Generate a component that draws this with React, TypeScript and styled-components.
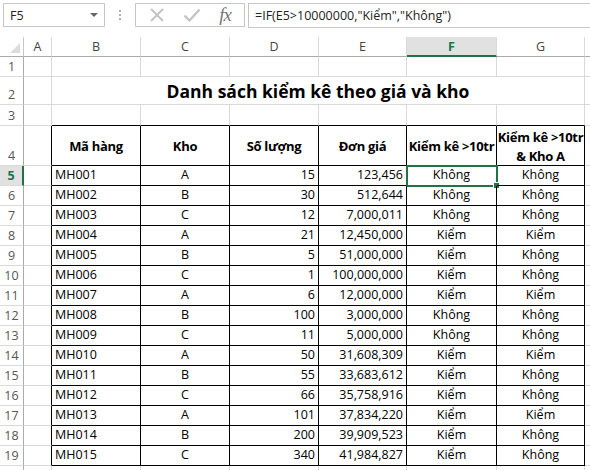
import React from "react";
import styled, { createGlobalStyle } from "styled-components";

const GlobalStyle = createGlobalStyle`
	html, body {
		margin: 0;
		padding: 0;
		background: #ffffff;
	}
	body {
		font-family: "Open Sans", "Liberation Sans", sans-serif;
		overflow: hidden;
	}
`;

type Row = [string, string, number, string, string, string];

const rows: Row[] = [
	["MH001", "A", 15, "123,456", "Không", "Không"],
	["MH002", "B", 30, "512,644", "Không", "Không"],
	["MH003", "C", 12, "7,000,011", "Không", "Không"],
	["MH004", "A", 21, "12,450,000", "Kiểm", "Kiểm"],
	["MH005", "B", 5, "51,000,000", "Kiểm", "Không"],
	["MH006", "C", 1, "100,000,000", "Kiểm", "Không"],
	["MH007", "A", 6, "12,000,000", "Kiểm", "Kiểm"],
	["MH008", "B", 100, "3,000,000", "Không", "Không"],
	["MH009", "C", 11, "5,000,000", "Không", "Không"],
	["MH010", "A", 50, "31,608,309", "Kiểm", "Kiểm"],
	["MH011", "B", 55, "33,683,612", "Kiểm", "Không"],
	["MH012", "C", 66, "35,758,916", "Kiểm", "Không"],
	["MH013", "A", 101, "37,834,220", "Kiểm", "Kiểm"],
	["MH014", "B", 200, "39,909,523", "Kiểm", "Không"],
	["MH015", "C", 340, "41,984,827", "Kiểm", "Không"],
];

type Align = "left" | "center" | "right";

const columns = ["A", "B", "C", "D", "E", "F", "G", ""];
const aligns: Align[] = ["left", "left", "center", "right", "right", "center", "center", "left"];

const GRID = "#d9d9d9";
const BLACK = "#000000";
const GREEN = "#217346";

export default function App() {
	const cells: React.ReactNode[] = [];

	// column headers
	cells.push(<Corner key="corner"><CornerMark /></Corner>);
	columns.forEach((c, i) => {
		cells.push(
			<ColHeader key={`h${i}`} $active={c === "F"}>{c}</ColHeader>
		);
	});

	// rows 1..20 (20 is only a sliver at the bottom)
	for (let r = 1; r <= 20; r++) {
		cells.push(
			<RowHeader key={`r${r}`} $active={r === 5}>{r < 20 ? r : ""}</RowHeader>
		);

		if (r === 2) {
			cells.push(<Cell key="2a" $right={GRID} $bottom={GRID} />);
			cells.push(<TitleCell key="title">Danh sách kiểm kê theo giá và kho</TitleCell>);
			cells.push(<Cell key="2h" $right={GRID} $bottom={GRID} />);
			continue;
		}

		for (let c = 0; c < 8; c++) {
			const inTable = r >= 4 && r <= 19 && c >= 1 && c <= 6;
			const right = inTable || (c === 0 && r >= 4 && r <= 19) ? BLACK : GRID;
			const bottom = inTable || (r === 3 && c >= 1 && c <= 6) ? BLACK : GRID;
			let content: React.ReactNode = null;

			if (r === 4 && inTable) {
				content = [
					"Mã hàng",
					"Kho",
					"Số lượng",
					"Đơn giá",
					"Kiểm kê >10tr",
					<React.Fragment key="g">Kiểm kê &gt;10tr<br />&amp; Kho A</React.Fragment>,
				][c - 1];
			} else if (r >= 5 && r <= 19 && inTable) {
				content = rows[r - 5][c - 1];
			}

			cells.push(
				<Cell
					key={`${r}-${c}`}
					$right={right}
					$bottom={bottom}
					$align={r === 4 ? "center" : aligns[c]}
					$head={r === 4 && inTable}
				>
					{content}
					{r === 5 && c === 5 && (
						<Selection>
							<Handle />
						</Selection>
					)}
				</Cell>
			);
		}
	}

	return (
		<>
			<GlobalStyle />
			<Page>
				<FormulaBar>
					<NameBox>
						<span>F5</span>
						<DropArrow />
					</NameBox>
					<Grip>
						<i /><i /><i />
					</Grip>
					<ButtonBox>
						<svg width="16" height="16" viewBox="0 0 16 16">
							<path d="M2 2 L14 14 M14 2 L2 14" stroke="#c4c4c4" strokeWidth="2" fill="none" />
						</svg>
						<svg width="18" height="16" viewBox="0 0 18 16">
							<path d="M1.5 8.5 L6.5 13.5 L16.5 2.5" stroke="#c4c4c4" strokeWidth="2.4" fill="none" />
						</svg>
						<Fx>fx</Fx>
					</ButtonBox>
					<FormulaInput>=IF(E5&gt;10000000,"Kiểm","Không")</FormulaInput>
				</FormulaBar>
				<Sheet>{cells}</Sheet>
			</Page>
		</>
	);
}

const Page = styled.div`
	width: 590px;
	height: 470px;
	overflow: hidden;
	display: flex;
	flex-direction: column;
`;

const FormulaBar = styled.div`
	flex-shrink: 0;
	height: 37px;
	display: flex;
	align-items: flex-start;
	padding-top: 3px;
	box-sizing: border-box;
`;

const NameBox = styled.div`
	margin-left: 3px;
	width: 102px;
	height: 24px;
	box-sizing: border-box;
	border: 1px solid #c6c6c6;
	display: flex;
	align-items: center;
	justify-content: space-between;
	padding: 0 6px 0 6px;
	font-size: 12.5px;
	color: #222;
`;

const DropArrow = styled.span`
	width: 0;
	height: 0;
	border-left: 4px solid transparent;
	border-right: 4px solid transparent;
	border-top: 4px solid #666;
`;

const Grip = styled.div`
	width: 30px;
	height: 24px;
	display: flex;
	flex-direction: column;
	align-items: center;
	justify-content: center;
	gap: 2px;

	i {
		width: 2px;
		height: 2px;
		background: #b0b0b0;
	}
`;

const ButtonBox = styled.div`
	width: 110px;
	height: 24px;
	box-sizing: border-box;
	border: 1px solid #c6c6c6;
	display: flex;
	align-items: center;
	justify-content: space-around;
	padding: 0 4px;
`;

const Fx = styled.span`
	font-family: "Liberation Serif", serif;
	font-style: italic;
	font-size: 19px;
	color: #777;
	letter-spacing: -1px;
`;

const FormulaInput = styled.div`
	margin-left: 3px;
	flex: 1;
	height: 25px;
	box-sizing: border-box;
	border-top: 1px solid #c6c6c6;
	border-bottom: 1px solid #c6c6c6;
	border-left: 1px solid #c6c6c6;
	display: flex;
	align-items: center;
	padding-left: 6px;
	font-size: 12.5px;
	color: #222;
`;

const Sheet = styled.div`
	flex-shrink: 0;
	display: grid;
	grid-template-columns: 24px 28px 89px 89px 89px 88px 90px 88px 1fr;
	grid-template-rows: 20px 20px 28px 21px 40px repeat(16, 20px);
`;

const Corner = styled.div`
	position: relative;
	border-right: 1px solid #c6c6c6;
	border-bottom: 1px solid #ababab;
	box-sizing: border-box;
`;

const CornerMark = styled.div`
	position: absolute;
	right: 3px;
	bottom: 3px;
	width: 0;
	height: 0;
	border-left: 10px solid transparent;
	border-bottom: 10px solid #dcdcdc;
`;

const ColHeader = styled.div<{ $active: boolean }>`
	box-sizing: border-box;
	display: flex;
	align-items: center;
	justify-content: center;
	font-size: 12.5px;
	color: ${({ $active }) => ($active ? GREEN : "#444")};
	font-weight: ${({ $active }) => ($active ? 700 : 400)};
	background: ${({ $active }) => ($active ? "#e1e1e1" : "#ffffff")};
	border-right: 1px solid #dadada;
	border-bottom: ${({ $active }) => ($active ? `2px solid ${GREEN}` : "1px solid #ababab")};
`;

const RowHeader = styled.div<{ $active: boolean }>`
	box-sizing: border-box;
	display: flex;
	align-items: flex-end;
	justify-content: center;
	padding-bottom: 1px;
	font-size: 12.5px;
	line-height: 17px;
	color: ${({ $active }) => ($active ? GREEN : "#555")};
	font-weight: ${({ $active }) => ($active ? 700 : 400)};
	background: ${({ $active }) => ($active ? "#e1e1e1" : "#ffffff")};
	border-bottom: 1px solid #dadada;
	border-right: ${({ $active }) => ($active ? `2px solid ${GREEN}` : "1px solid #ababab")};
`;

const Cell = styled.div<{
	$right: string;
	$bottom: string;
	$align?: Align;
	$head?: boolean;
}>`
	position: relative;
	box-sizing: border-box;
	border-right: 1px solid ${({ $right }) => $right};
	border-bottom: 1px solid ${({ $bottom }) => $bottom};
	display: flex;
	align-items: ${({ $head }) => ($head ? "center" : "flex-end")};
	justify-content: ${({ $align }) =>
		$align === "center" ? "center" : $align === "right" ? "flex-end" : "flex-start"};
	text-align: center;
	padding: ${({ $head }) => ($head ? "2px 2px 0" : "0 3px 1px")};
	font-size: ${({ $head }) => ($head ? "13px" : "12.5px")};
	line-height: ${({ $head }) => ($head ? "19px" : "18px")};
	font-weight: ${({ $head }) => ($head ? 700 : 400)};
	letter-spacing: ${({ $head }) => ($head ? "-0.3px" : "0")};
	color: #000;
	white-space: nowrap;
`;

const TitleCell = styled.div`
	grid-column: span 6;
	box-sizing: border-box;
	border-right: 1px solid ${GRID};
	border-bottom: 1px solid ${GRID};
	display: flex;
	align-items: center;
	justify-content: center;
	font-size: 17.5px;
	font-weight: 700;
	color: #000;
	padding-top: 1px;
`;

const Selection = styled.div`
	position: absolute;
	left: -1px;
	top: -1px;
	right: -2px;
	bottom: -2px;
	border: 2px solid ${GREEN};
	pointer-events: none;
`;

const Handle = styled.div`
	position: absolute;
	right: -4px;
	bottom: -4px;
	width: 5px;
	height: 5px;
	background: ${GREEN};
	border: 1px solid #fff;
`;
